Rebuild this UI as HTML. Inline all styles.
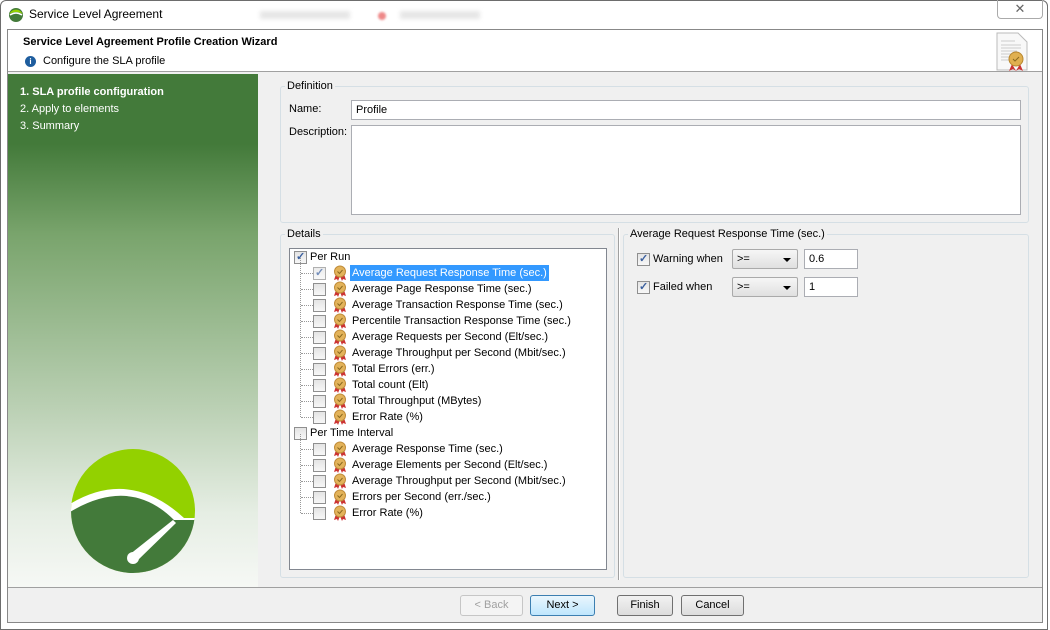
<!DOCTYPE html>
<html><head><style>
*{box-sizing:border-box;margin:0;padding:0}
body{width:1050px;height:630px;background:#fff;font-family:"Liberation Sans",sans-serif;font-size:11px;color:#000;position:relative;overflow:hidden}
.a{position:absolute}
.fs{position:absolute;border:1px solid #d5dfe5;border-radius:3px}
.lg{position:absolute;background:#f0f0f0;padding:0 2px;font-size:11px;top:-7px;left:4px}
.cb{position:absolute;width:13px;height:13px;border:1px solid #8f8f8f;background:linear-gradient(#e4e4e4,#f7f7f7)}
.cb.c::after{content:"✓";position:absolute;left:1px;top:-2px;font-size:11px;color:#3a5f9e;font-weight:bold}
.row{position:absolute;height:16px;line-height:16px;white-space:nowrap}
.btn{position:absolute;top:595px;height:21px;border:1px solid #707070;border-radius:3px;background:linear-gradient(#f2f2f2,#dcdcdc);text-align:center;line-height:19px;font-size:11px}
.med{position:absolute;width:14px;height:16px}
.dots{position:absolute;border-top:1px dotted #999;width:12px}
.sel{position:absolute;width:66px;height:20px;border:1px solid #aaa;border-radius:2px;background:linear-gradient(#f6f6f6,#e0e0e0);padding-left:4px;line-height:18px}
.sel::after{content:"";position:absolute;right:6px;top:8px;border:4px solid transparent;border-top:4px solid #000}
.inp{position:absolute;background:#fff;border:1px solid #abadb3;padding-left:4px;line-height:18px}
</style></head><body>
<div class="a" style="left:0;top:0;width:1048px;height:630px;border:1px solid #6d6d6d;border-radius:6px 6px 0 0;background:#fff"></div>
<svg class="a" style="left:8px;top:7px" width="16" height="16"><circle cx="8" cy="8" r="7" fill="#437a3a"/><path d="M1.5 7 A7 7 0 0 1 14.5 7 Q8 3 1.5 7Z" fill="#93d100"/><path d="M2 8 Q8 4 14 8" stroke="#fff" stroke-width="1.5" fill="none"/></svg>
<div class="a" style="left:29px;top:7px;font-size:12px">Service Level Agreement</div>
<div class="a" style="left:260px;top:11px;width:90px;height:8px;background:#e6e6e6;filter:blur(2px)"></div>
<div class="a" style="left:378px;top:12px;width:8px;height:8px;background:#e88;border-radius:50%;filter:blur(1px)"></div>
<div class="a" style="left:400px;top:11px;width:80px;height:8px;background:#e6e6e6;filter:blur(2px)"></div>
<div class="a" style="left:997px;top:0;width:46px;height:19px;border:1px solid #aaa;border-top:none;border-radius:0 0 4px 4px;text-align:center;font-size:13px;color:#666;line-height:17px">✕</div>
<div class="a" style="left:7px;top:29px;width:1036px;height:594px;border:1px solid #888;background:#f0f0f0"></div>
<div class="a" style="left:8px;top:30px;width:1034px;height:42px;background:#fff;border-bottom:1px solid #a0a0a0"></div>
<div class="a" style="left:23px;top:36px;font-weight:bold;font-size:11px">Service Level Agreement Profile Creation Wizard</div>
<div class="a" style="left:25px;top:56px;width:11px;height:11px;border-radius:50%;background:#1e5d9e;color:#fff;font-size:8px;font-weight:bold;text-align:center;line-height:11px">i</div>
<div class="a" style="left:43px;top:55px">Configure the SLA profile</div>
<svg class="a" style="left:996px;top:32px" width="34" height="40"><path d="M1 1H22L31 10V38H1Z" fill="#f8f8f8" stroke="#bbb"/><path d="M5 9h14M5 13h20M5 16h20M5 19h16M5 22h14M5 25h12M5 28h12" stroke="#ccc"/><path d="M16 32l-3 7 4-2 3 2zM24 32l3 7-4-2-3 2z" fill="#c33"/><circle cx="20" cy="27" r="7" fill="#e0b050" stroke="#b8862e"/><path d="M17 27l2 2 4-4" stroke="#8a6a20" fill="none"/></svg>
<div class="a" style="left:8px;top:74px;width:250px;height:513px;background:linear-gradient(#437a3a 0px,#437a3a 70px,#79a46c 160px,#b9cfb2 330px,#e6eee4 440px,#f6f8f5 513px)"></div>
<div class="a" style="left:20px;top:86px;color:#fff;font-weight:bold;font-size:11px">1. SLA profile configuration</div>
<div class="a" style="left:20px;top:103px;color:#fff">2. Apply to elements</div>
<div class="a" style="left:20px;top:120px;color:#fff">3. Summary</div>
<svg class="a" style="left:70px;top:448px" width="126" height="126"><defs><clipPath id="cc"><circle cx="63" cy="63" r="62"/></clipPath></defs><g clip-path="url(#cc)"><rect width="126" height="126" fill="#93d100"/><path d="M0 56 Q60 20 114 70 L126 70 V126 H0Z" fill="#fff"/><path d="M0 64 Q60 28 104 72 L126 72 V126 H0Z" fill="#437a3a"/></g><path d="M59 107 L103 72 L106 75 L67 113Z" fill="#fff"/><circle cx="63" cy="110" r="6" fill="#fff"/></svg>
<div class="a" style="left:8px;top:587px;width:1034px;height:1px;background:#a0a0a0"></div>
<div class="fs" style="left:280px;top:86px;width:749px;height:137px"><div class="lg">Definition</div></div>
<div class="a" style="left:289px;top:103px">Name:</div>
<div class="inp" style="left:351px;top:100px;width:670px;height:20px">Profile</div>
<div class="a" style="left:289px;top:126px">Description:</div>
<div class="inp" style="left:351px;top:125px;width:670px;height:90px"></div>
<div class="fs" style="left:280px;top:234px;width:335px;height:344px"><div class="lg">Details</div></div>
<div class="a" style="left:289px;top:248px;width:318px;height:322px;background:#fff;border:1px solid #828790"></div>
<div class="a" style="left:618px;top:228px;width:2px;height:352px;border-left:1px solid #a0a0a0;border-right:1px solid #fff"></div>
<div class="fs" style="left:623px;top:234px;width:406px;height:344px"><div class="lg">Average Request Response Time (sec.)</div></div>
<div class="cb c" style="left:637px;top:253px"></div><div class="a" style="left:653px;top:253px">Warning when</div>
<div class="sel" style="left:732px;top:249px">&gt;=</div>
<div class="inp" style="left:804px;top:249px;width:54px;height:20px">0.6</div>
<div class="cb c" style="left:637px;top:281px"></div><div class="a" style="left:653px;top:281px">Failed when</div>
<div class="sel" style="left:732px;top:277px">&gt;=</div>
<div class="inp" style="left:804px;top:277px;width:54px;height:20px">1</div>
<div id="tree"></div>
<div class="btn" style="left:460px;width:63px;color:#a0a0a0;border-color:#c6c6c6;background:#f4f4f4">&lt; Back</div>
<div class="btn" style="left:530px;width:65px;border-color:#3c7fb1;background:linear-gradient(#eaf6fd,#bee6fd)">Next &gt;</div>
<div class="btn" style="left:617px;width:56px">Finish</div>
<div class="btn" style="left:681px;width:63px">Cancel</div>
<script>
var h='';
function med(x,y){return '<svg class="med" style="left:'+x+'px;top:'+y+'px" viewBox="0 0 14 16"><path d="M3 9l-2 6 3-1 1 2 2-5zM11 9l2 6-3-1-1 2-2-5z" fill="#c33"/><circle cx="7" cy="6.5" r="5.5" fill="#e3b35a" stroke="#c08c3a"/><path d="M4.5 6.5l2 2 3-3.5" stroke="#8a6a20" fill="none"/></svg>';}
function group(y,label,c,items,sel){
 h+='<div class="cb'+(c?' c':'')+'" style="left:294px;top:'+(y-6)+'px"></div><div class="row" style="left:310px;top:'+(y-8)+'px">'+label+'</div>';
 h+='<div class="a" style="left:300px;top:'+(y+1)+'px;height:'+(items.length*16-1)+'px;border-left:1px dotted #999"></div>';
 items.forEach(function(t,i){var yy=y+16*(i+1);
  h+='<div class="dots" style="left:301px;top:'+yy+'px"></div>';
  h+='<div class="cb'+(sel&&i==0?' c':'')+'" style="left:313px;top:'+(yy-6)+'px'+(sel&&i==0?';opacity:.7':'')+'"></div>';
  h+=med(333,yy-8);
  h+='<div class="row" style="left:350px;top:'+(yy-8)+'px;padding:0 2px;'+(sel&&i==0?'background:#3399ff;color:#fff':'')+'">'+t+'</div>';});
}
group(257,'Per Run',true,['Average Request Response Time (sec.)','Average Page Response Time (sec.)','Average Transaction Response Time (sec.)','Percentile Transaction Response Time (sec.)','Average Requests per Second (Elt/sec.)','Average Throughput per Second (Mbit/sec.)','Total Errors (err.)','Total count (Elt)','Total Throughput (MBytes)','Error Rate (%)'],true);
group(433,'Per Time Interval',false,['Average Response Time (sec.)','Average Elements per Second (Elt/sec.)','Average Throughput per Second (Mbit/sec.)','Errors per Second (err./sec.)','Error Rate (%)'],false);
document.getElementById('tree').outerHTML=h;
</script>
</body></html>
